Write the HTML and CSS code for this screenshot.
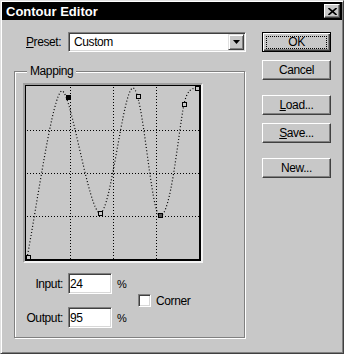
FILE: index.html
```html
<!DOCTYPE html>
<html>
<head>
<meta charset="utf-8">
<link rel="stylesheet" href="styles.css">
</head>
<body>
<div class="window">
  <div class="titlebar">
    <span class="title">Contour Editor</span>
    <div class="close">
      <svg width="9" height="7" viewBox="0 0 9 7"><path d="M0.5,0 L8.5,7 M8.5,0 L0.5,7" stroke="#000" stroke-width="1.6" fill="none"/></svg>
    </div>
  </div>
  <div class="body">
    <div class="left">
      <div class="preset-row">
        <span class="preset-label"><u>P</u>reset:</span>
        <div class="select">
          <span class="select-text">Custom</span>
          <span class="drop"><svg width="7" height="4" viewBox="0 0 7 4"><polygon points="0,0 7,0 3.5,4" fill="#000"/></svg></span>
        </div>
      </div>
      <div class="group">
        <div class="group-title">Mapping</div>
        <div class="graph-frame">
          <svg class="graph" width="176" height="176" viewBox="0 0 176 176">
            <rect x="0" y="0" width="176" height="176" fill="#c8c8c8"/>
            <g stroke="#000" stroke-width="1" stroke-dasharray="1 2" shape-rendering="crispEdges">
              <line x1="45.5" y1="2" x2="45.5" y2="175"/>
              <line x1="88.5" y1="2" x2="88.5" y2="175"/>
              <line x1="131.5" y1="2" x2="131.5" y2="175"/>
              <line x1="2" y1="45.5" x2="175" y2="45.5"/>
              <line x1="2" y1="88.5" x2="175" y2="88.5"/>
              <line x1="2" y1="131.5" x2="175" y2="131.5"/>
            </g>
            <rect x="0.5" y="0.5" width="175" height="175" fill="none" stroke="#000" shape-rendering="crispEdges"/>
            <line x1="174.5" y1="0" x2="174.5" y2="176" stroke="#000" shape-rendering="crispEdges"/>
            <line x1="0" y1="174.5" x2="176" y2="174.5" stroke="#000" shape-rendering="crispEdges"/>
            <path d="M2,173 C12,120 28,6 37,6 C46,6 64,128 75,128 C86,128 98,3 108,3 C118,3 126,131 135,131 C146,131 153,50 159,19 C162,6 166,3 172,3" fill="none" stroke="#000" stroke-width="1.2" stroke-dasharray="1 2.2"/>
            <g stroke="#000" stroke-width="1" fill="#c8c8c8" shape-rendering="crispEdges">
              <rect x="1.5" y="170.5" width="4" height="4"/>
              <rect x="170.5" y="1.5" width="4" height="4"/>
              <rect x="111.5" y="9.5" width="4" height="4"/>
              <rect x="157.5" y="17.5" width="4" height="4"/>
              <rect x="73.5" y="126.5" width="4" height="4"/>
              <rect x="133.5" y="128.5" width="4" height="4" fill="#555"/>
            </g>
            <rect x="41" y="10" width="5" height="5" fill="#000"/>
          </svg>
        </div>
        <div class="io">
          <span class="io-label">Input:</span>
          <div class="field">24</div>
          <span class="pct">%</span>
          <div class="check-cell">
            <span class="checkbox"></span>
            <span class="check-label">Corner</span>
          </div>
          <span class="io-label">Output:</span>
          <div class="field">95</div>
          <span class="pct">%</span>
        </div>
      </div>
    </div>
    <div class="right">
      <div class="btn default"><span class="focus">OK</span></div>
      <div class="btn gap-s">Cancel</div>
      <div class="btn gap-l"><span><u>L</u>oad...</span></div>
      <div class="btn gap-s"><span><u>S</u>ave...</span></div>
      <div class="btn gap-l">New...</div>
    </div>
  </div>
</div>
</body>
</html>
```
FILE: styles.css
```css
* { box-sizing: border-box; }
html, body { margin: 0; padding: 0; }
body {
  width: 344px;
  height: 354px;
  overflow: hidden;
  background: #c8c8c8;
  font-family: "Liberation Sans", Arial, sans-serif;
  font-size: 12px;
  letter-spacing: -0.4px;
  color: #000;
}
u { text-decoration: underline; text-underline-offset: 1px; }

.window {
  width: 344px;
  height: 354px;
  background: #c8c8c8;
  border: 1px solid;
  border-color: #e0e0e0 #404040 #404040 #e0e0e0;
  box-shadow: inset 1px 1px 0 #fff, inset -1px -1px 0 #808080;
  padding: 1px;
  display: flex;
  flex-direction: column;
}

.titlebar {
  height: 18px;
  flex: none;
  background: #000;
  display: flex;
  align-items: center;
  justify-content: space-between;
  padding: 0 2px 0 4px;
}
.title {
  color: #fff;
  font-weight: bold;
  font-size: 13px;
  letter-spacing: 0;
}
.close {
  width: 16px;
  height: 14px;
  background: #c8c8c8;
  border: 1px solid;
  border-color: #fff #404040 #404040 #fff;
  box-shadow: inset -1px -1px 0 #808080;
  display: flex;
  align-items: center;
  justify-content: center;
}
.close svg { display: block; }

.body { display: flex; flex: 1; }

.left {
  width: 232px;
  margin-left: 12px;
  display: flex;
  flex-direction: column;
}

.preset-row {
  display: flex;
  align-items: center;
  height: 20px;
  margin-top: 12px;
  padding-left: 12px;
}
.preset-label { width: 42px; flex: none; }

.sunken {
  border: 1px solid;
}
.select {
  flex: 1;
  height: 20px;
  background: #fff;
  border: 1px solid;
  border-color: #808080 #fff #fff #808080;
  box-shadow: inset 1px 1px 0 #404040, inset -1px -1px 0 #d8d8d8;
  display: flex;
  align-items: center;
  padding: 0 1px 0 5px;
}
.select-text { flex: 1; }
.drop {
  width: 16px;
  height: 16px;
  background: #c8c8c8;
  border: 1px solid;
  border-color: #e0e0e0 #404040 #404040 #e0e0e0;
  box-shadow: inset 1px 1px 0 #fff, inset -1px -1px 0 #808080;
  display: flex;
  align-items: center;
  justify-content: center;
}
.drop svg { display: block; }

.group {
  margin-top: 19px;
  width: 231px;
  border: 1px solid #808080;
  box-shadow: inset 1px 1px 0 #fff, 1px 1px 0 #fff;
  padding: 0 0 9px 0;
}
.group-title {
  width: fit-content;
  height: 14px;
  line-height: 14px;
  margin: -8px 0 0 12px;
  padding: 0 3px;
  background: #c8c8c8;
}

.graph-frame {
  width: 180px;
  height: 180px;
  margin: 5px 0 0 8px;
  border: 2px solid;
  border-color: #a0a0a0 #f4f4f4 #f4f4f4 #a0a0a0;
}
.graph { display: block; }

.io {
  display: grid;
  grid-template-columns: 48px 44px 16px auto;
  grid-template-rows: 21px 21px;
  column-gap: 5px;
  row-gap: 13px;
  margin-top: 10px;
}
.io-label {
  text-align: right;
  align-self: center;
}
.field {
  background: #fff;
  border: 1px solid;
  border-color: #808080 #fff #fff #808080;
  box-shadow: inset 1px 1px 0 #404040, inset -1px -1px 0 #d8d8d8;
  display: flex;
  align-items: center;
  padding-left: 1px;
}
.pct { align-self: center; font-size: 11px; }
.check-cell {
  grid-column: 4;
  grid-row: 1 / span 2;
  display: flex;
  align-items: center;
}
.checkbox {
  width: 13px;
  height: 13px;
  background: #fff;
  border: 1px solid;
  border-color: #808080 #fff #fff #808080;
  box-shadow: inset 1px 1px 0 #404040, inset -1px -1px 0 #d8d8d8;
}
.check-label { margin-left: 5px; }

.right {
  margin-left: 16px;
  padding-top: 12px;
  display: flex;
  flex-direction: column;
}
.btn {
  width: 69px;
  height: 20px;
  background: #c8c8c8;
  border: 1px solid;
  border-color: #fff #404040 #404040 #fff;
  box-shadow: inset -1px -1px 0 #808080;
  display: flex;
  align-items: center;
  justify-content: center;
}
.btn.default {
  border-color: #000;
  box-shadow: inset 1px 1px 0 #fff, inset -1px -1px 0 #404040, inset -2px -2px 0 #808080;
}
.focus {
  width: 61px;
  height: 13px;
  border: 1px dotted #000;
  display: flex;
  align-items: center;
  justify-content: center;
}
.gap-s { margin-top: 8px; }
.gap-l { margin-top: 15px; }
```
